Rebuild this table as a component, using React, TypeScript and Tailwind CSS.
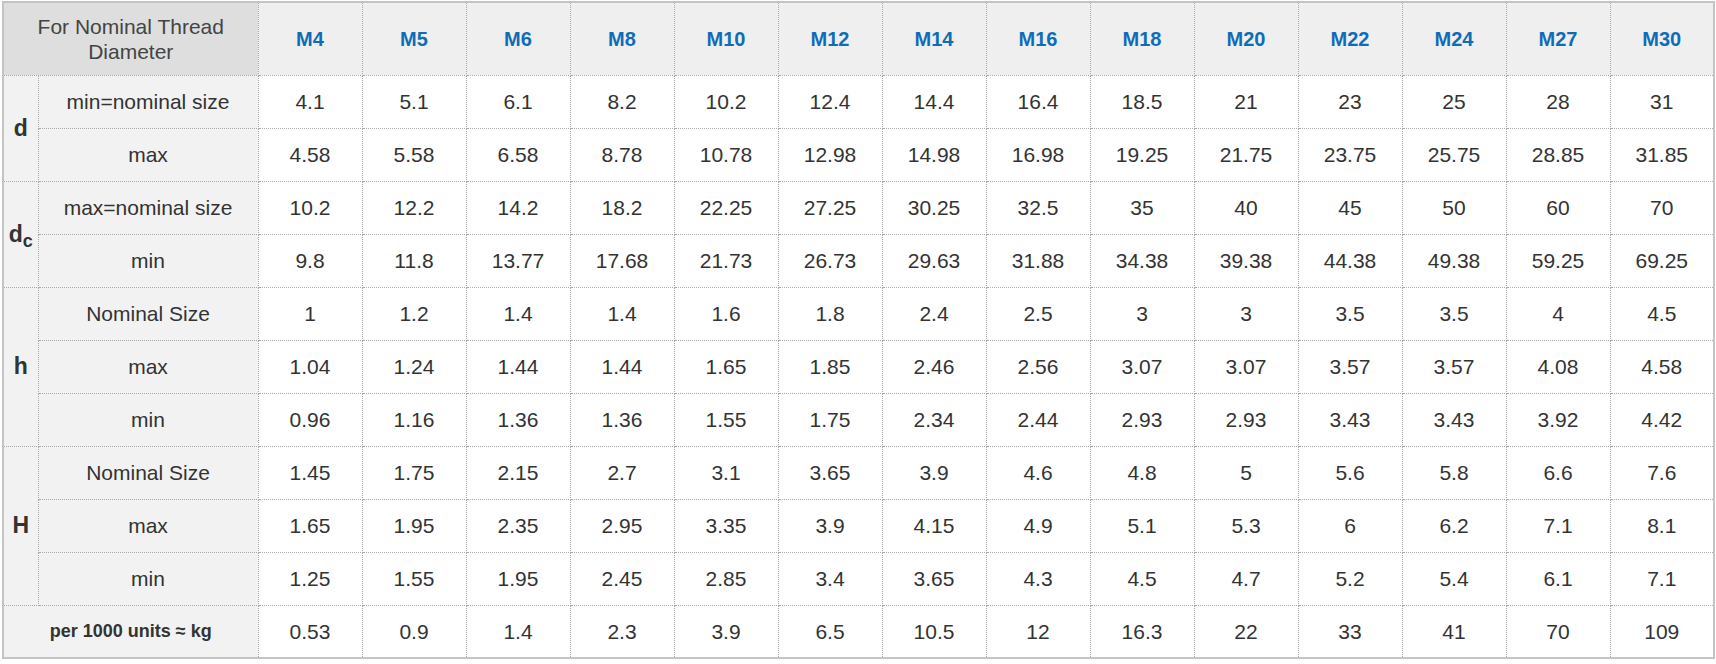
import React from 'react';

const SIZES = ['M4', 'M5', 'M6', 'M8', 'M10', 'M12', 'M14', 'M16', 'M18', 'M20', 'M22', 'M24', 'M27', 'M30'];

type Row = { label: string; values: string[] };
type Group = { symbol: React.ReactNode; rows: Row[] };

const GROUPS: Group[] = [
  {
    symbol: 'd',
    rows: [
      { label: 'min=nominal size', values: ['4.1', '5.1', '6.1', '8.2', '10.2', '12.4', '14.4', '16.4', '18.5', '21', '23', '25', '28', '31'] },
      { label: 'max', values: ['4.58', '5.58', '6.58', '8.78', '10.78', '12.98', '14.98', '16.98', '19.25', '21.75', '23.75', '25.75', '28.85', '31.85'] },
    ],
  },
  {
    symbol: (
      <>
        d<span className="relative top-[5px] text-[18px]">c</span>
      </>
    ),
    rows: [
      { label: 'max=nominal size', values: ['10.2', '12.2', '14.2', '18.2', '22.25', '27.25', '30.25', '32.5', '35', '40', '45', '50', '60', '70'] },
      { label: 'min', values: ['9.8', '11.8', '13.77', '17.68', '21.73', '26.73', '29.63', '31.88', '34.38', '39.38', '44.38', '49.38', '59.25', '69.25'] },
    ],
  },
  {
    symbol: 'h',
    rows: [
      { label: 'Nominal Size', values: ['1', '1.2', '1.4', '1.4', '1.6', '1.8', '2.4', '2.5', '3', '3', '3.5', '3.5', '4', '4.5'] },
      { label: 'max', values: ['1.04', '1.24', '1.44', '1.44', '1.65', '1.85', '2.46', '2.56', '3.07', '3.07', '3.57', '3.57', '4.08', '4.58'] },
      { label: 'min', values: ['0.96', '1.16', '1.36', '1.36', '1.55', '1.75', '2.34', '2.44', '2.93', '2.93', '3.43', '3.43', '3.92', '4.42'] },
    ],
  },
  {
    symbol: 'H',
    rows: [
      { label: 'Nominal Size', values: ['1.45', '1.75', '2.15', '2.7', '3.1', '3.65', '3.9', '4.6', '4.8', '5', '5.6', '5.8', '6.6', '7.6'] },
      { label: 'max', values: ['1.65', '1.95', '2.35', '2.95', '3.35', '3.9', '4.15', '4.9', '5.1', '5.3', '6', '6.2', '7.1', '8.1'] },
      { label: 'min', values: ['1.25', '1.55', '1.95', '2.45', '2.85', '3.4', '3.65', '4.3', '4.5', '4.7', '5.2', '5.4', '6.1', '7.1'] },
    ],
  },
];

const WEIGHT = ['0.53', '0.9', '1.4', '2.3', '3.9', '6.5', '10.5', '12', '16.3', '22', '33', '41', '70', '109'];

const cell = 'border border-dotted border-[#a9a9a9] text-center align-middle';

export default function App() {
  return (
    <div className="bg-white pl-[2px] pt-[1px] font-['Liberation_Sans',Arial,sans-serif] text-[#333]">
      <table className="w-[1710px] table-fixed border-collapse border-2 border-solid border-[#c4c4c4] text-[21px]">
        <colgroup>
          <col className="w-[35px]" />
          <col className="w-[220px]" />
          {SIZES.map(s => (
            <col key={s} className="w-[104px]" />
          ))}
        </colgroup>
        <thead>
          <tr className="h-[73px]">
            <th colSpan={2} className={`${cell} bg-[#dedede] px-8 text-[21px] font-normal leading-[25px] text-[#444]`}>
              For Nominal Thread Diameter
            </th>
            {SIZES.map(s => (
              <th key={s} className={`${cell} bg-[#efefef] text-[20px] font-bold text-[#0f6db7]`}>
                {s}
              </th>
            ))}
          </tr>
        </thead>
        <tbody>
          {GROUPS.map((g, gi) =>
            g.rows.map((r, ri) => (
              <tr key={`${gi}-${ri}`} className="h-[53px]">
                {ri === 0 && (
                  <td rowSpan={g.rows.length} className={`${cell} bg-[#f2f2f2] text-[23px] font-bold`}>
                    {g.symbol}
                  </td>
                )}
                <td className={`${cell} bg-[#f2f2f2]`}>{r.label}</td>
                {r.values.map((v, i) => (
                  <td key={i} className={`${cell} bg-white`}>
                    {v}
                  </td>
                ))}
              </tr>
            )),
          )}
          <tr className="h-[53px]">
            <td colSpan={2} className={`${cell} bg-[#f2f2f2] text-[18px] font-bold`}>
              per 1000 units ≈ kg
            </td>
            {WEIGHT.map((v, i) => (
              <td key={i} className={`${cell} bg-white`}>
                {v}
              </td>
            ))}
          </tr>
        </tbody>
      </table>
    </div>
  );
}
